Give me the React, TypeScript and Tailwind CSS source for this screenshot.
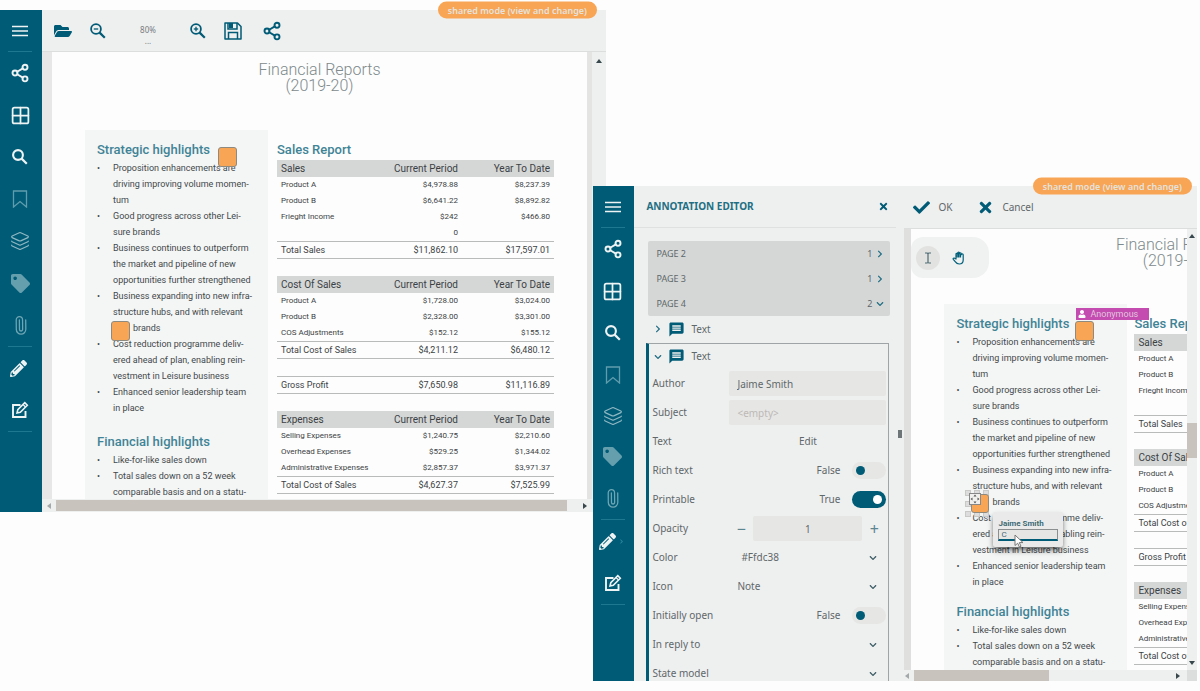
import type { ReactNode } from 'react';
import { Share2, Grid2x2, Layers, Paperclip } from 'lucide-react';
import { FaFolderOpen, FaTag, FaPencilAlt, FaCheck, FaTimes, FaUser, FaChevronRight, FaChevronDown } from 'react-icons/fa';
import { MdMessage } from 'react-icons/md';

function MenuIcon() {
  return (
    <svg viewBox="0 0 16 12" className="h-3 w-4" fill="none" stroke="currentColor" strokeWidth="1.700">
      <path d="M0 1.500h16M0 6h16M0 10.500h16" />
    </svg>
  );
}

function LensIcon({ sign, bold }: { sign?: 'plus' | 'minus'; bold?: boolean }) {
  return (
    <svg viewBox="0 0 16 16" className="h-4 w-4" fill="none" stroke="currentColor" strokeWidth={bold ? 2.1 : 1.8}>
      <circle cx="6" cy="6" r="4.9" />
      <path d="M9.6 9.6l5.2 5.2" strokeWidth="2.2" />
      {sign && <path d="M3.8 6h4.4" strokeWidth="1.3" />}
      {sign === 'plus' && <path d="M6 3.8v4.4" strokeWidth="1.3" />}
    </svg>
  );
}

function SaveIcon() {
  return (
    <svg viewBox="0 0 18 18" className="h-[18px] w-[18px]" fill="none" stroke="currentColor" strokeWidth="1.5">
      <path d="M1 1h12.5L17 4.500V17H1z" strokeLinejoin="round" />
      <path d="M4.500 17v-6.500h9V17" />
      <path d="M4 1v6h9V1" />
      <path d="M5 1h4v5H5z" fill="currentColor" stroke="none" />
    </svg>
  );
}

function BookmarkIcon() {
  return (
    <svg viewBox="0 0 16 18" className="h-[18px] w-4" fill="none" stroke="currentColor" strokeWidth="1.300">
      <path d="M1.500 1h13v16L8 11.500 1.500 17z" />
    </svg>
  );
}

function EditIcon() {
  return (
    <svg viewBox="0 0 18 18" className="h-[18px] w-[18px]" fill="none" stroke="currentColor" strokeWidth="1.900">
      <path d="M9.500 4H2v12h12.500V10" />
      <path d="M6 12l.8-3.300 7-7 2.500 2.500-7 7z" strokeWidth="1.600" />
      <path d="M12 3.500l2.500 2.500" strokeWidth="1.200" />
    </svg>
  );
}

function HandIcon() {
  return (
    <svg viewBox="0 0 14 14" className="h-3.5 w-3.5" fill="none" stroke="#00607a" strokeWidth="1.200" strokeLinejoin="round" strokeLinecap="round">
      <path d="M4 8V3.200c0-1.200 1.700-1.200 1.700 0V2c0-1.200 1.800-1.200 1.800 0v.7c0-1.200 1.800-1.200 1.800 0v1c0-1.200 1.900-1.200 1.900 0V9c0 2.600-1.500 4-4 4-2 0-3-.9-4-2.300L1.300 8.300c-.6-1 .6-1.700 1.400-1z" />
      <path d="M4.200 3.200h1.500V6.500H4.200zM5.900 2h1.500v4.500H5.900zM7.700 2.700h1.400v3.800H7.700z" fill="#00607a" stroke="none" />
    </svg>
  );
}

function TextCursorIcon() {
  return (
    <svg viewBox="0 0 8 12" className="h-3 w-2" fill="none" stroke="#4d6b73" strokeWidth="1.200">
      <path d="M1 1h2l1 .6L5 1h2M4 1.500v9M1 11h2l1-.6 1 .6h2" />
    </svg>
  );
}

function Sidebar({ expanded }: { expanded?: boolean }) {
  const item = 'flex h-[42px] w-full items-center justify-center';
  const mid = 'flex w-full items-center justify-center ' + (expanded ? 'h-[41px]' : 'h-[42px]');
  return (
    <nav
      aria-label="Tools"
      className={(expanded ? 'w-[41px] pr-0.5' : 'w-[42px] pr-0.5') + ' flex shrink-0 flex-col items-center bg-[#005b76] text-[#eef3f4]'}
    >
      <button aria-label="Menu" className="flex h-[41px] w-full items-center justify-center"><MenuIcon /></button>
      <hr className="w-6 border-[#1d7890]" />
      <button aria-label="Share" className={item}><Share2 size={20} strokeWidth={2.3} /></button>
      <button aria-label="Pages" className={item}><Grid2x2 size={21} strokeWidth={2} /></button>
      <button aria-label="Search" className={item}><LensIcon bold /></button>
      <button aria-label="Bookmarks" className={mid + ' text-[#5f9dad]'}><BookmarkIcon /></button>
      <button aria-label="Layers" className={mid + ' text-[#8fb8c3]'}><Layers size={20} strokeWidth={1.4} /></button>
      <button aria-label="Tags" className={mid + ' text-[#659fad]'}><FaTag size={19} /></button>
      <button aria-label="Attachments" className={item + ' text-[#6fa6b4]'}><Paperclip size={19} strokeWidth={1.6} className="-rotate-45" /></button>
      <hr className="w-6 border-[#1d7890]" />
      <button aria-label="Annotate" className={item + ' relative'}>
        <FaPencilAlt size={17} className={expanded ? 'mr-2.5' : 'mr-1'} />
        {expanded && <FaChevronRight size={5} className="absolute right-2 text-[#2f8aa0]" />}
      </button>
      <button aria-label="Edit" className={item}><EditIcon /></button>
      <hr className="w-6 border-[#1d7890]" />
    </nav>
  );
}

type Row = [ReactNode, ReactNode, ReactNode];

function Ledger({ title, rows, total, gap }: { title?: string; rows: Row[]; total: Row; gap: string }) {
  return (
    <table className={'w-[277px] table-fixed border-collapse text-[9px] leading-4 text-[#3c4244] ' + gap}>
      <colgroup>
        <col className="w-[112px]" />
        <col className="w-[73px]" />
        <col />
      </colgroup>
      {title && (
        <thead>
          <tr className="h-[17px] bg-[#d5d7d7] text-[10px]">
            <th className="p-0 pl-1 text-left font-normal leading-4">{title}</th>
            <th className="p-0 pr-1 text-right font-normal leading-4">Current Period</th>
            <th className="p-0 pr-1 text-right font-normal leading-4">Year To Date</th>
          </tr>
        </thead>
      )}
      <tbody>
        {rows.map((row, i) => (
          <tr key={i} className="align-top text-[8px]">
            <td className="p-0 pl-1">{row[0]}</td>
            <td className="p-0 pr-1 text-right">{row[1]}</td>
            <td className="p-0 pr-1 text-right">{row[2]}</td>
          </tr>
        ))}
        <tr className="h-[17px] border-y border-[#b9bbbb]">
          <td className="p-0 pl-1">{total[0]}</td>
          <td className="p-0 pr-1 text-right">{total[1]}</td>
          <td className="p-0 pr-1 text-right">{total[2]}</td>
        </tr>
      </tbody>
    </table>
  );
}

function Bullet({ children }: { children: ReactNode }) {
  return (
    <li className="flex">
      <span className="w-4 shrink-0">•</span>
      <span className="whitespace-nowrap">{children}</span>
    </li>
  );
}

function Report({ compact, children }: { compact?: boolean; children?: ReactNode }) {
  const gap = compact ? 'mb-4' : 'mb-[17px]';
  const heading = 'text-[13px] font-medium leading-5 text-[#3f8496]';
  return (
    <article className="relative min-w-0 flex-1 overflow-hidden bg-[#fdfdfd] font-['Roboto','Liberation_Sans',sans-serif]">
      <div className="flex h-full w-[535px] flex-col">
        <h1 className={(compact ? 'h-[75px] w-[531px] pt-2' : 'h-[78px] pt-2.5') + ' shrink-0 text-center text-[16px] font-light leading-4 text-[#7e8a8c]'}>
          Financial Reports
          <br />
          (2019-20)
        </h1>
        <div className={(compact ? 'gap-[7px]' : 'gap-[9px]') + ' flex min-h-0 flex-1 pl-[33px]'}>
          <section className="w-[183px] shrink-0 bg-[#f4f5f5] pl-3 pt-2.5 text-[9px] leading-4 text-[#43494b]">
            <h2 className={heading}>Strategic highlights</h2>
            <ul>
              <Bullet>Proposition enhancements are<br />driving improving volume momen-<br />tum</Bullet>
              <Bullet>Good progress across other Lei-<br />sure brands</Bullet>
              <Bullet>Business continues to outperform<br />the market and pipeline of new<br />opportunities further strengthened</Bullet>
              <Bullet>Business expanding into new infra-<br />structure hubs, and with relevant<br /><span className="pl-5">brands</span></Bullet>
              <Bullet>Cost reduction programme deliv-<br />ered ahead of plan, enabling rein-<br />vestment in Leisure business</Bullet>
              <Bullet>Enhanced senior leadership team<br />in place</Bullet>
            </ul>
            <h2 className={heading + (compact ? ' mt-3' : ' mt-4')}>Financial highlights</h2>
            <ul>
              <Bullet>Like-for-like sales down</Bullet>
              <Bullet>Total sales down on a 52 week<br />comparable basis and on a statu-</Bullet>
            </ul>
          </section>
          <section className="shrink-0 pt-2.5">
            <h2 className={heading}>Sales Report</h2>
            <Ledger
              title="Sales"
              gap={gap}
              rows={[
                ['Product A', '$4,978.88', '$8,237.39'],
                ['Product B', '$6,641.22', '$8,892.82'],
                ['Frieght Income', <>$242<br />0</>, '$466.80'],
              ]}
              total={['Total Sales', '$11,862.10', '$17,597.01']}
            />
            <Ledger
              title="Cost Of Sales"
              gap={gap}
              rows={[
                ['Product A', '$1,728.00', '$3,024.00'],
                ['Product B', '$2,328.00', '$3,301.00'],
                ['COS Adjustments', '$152.12', '$155.12'],
              ]}
              total={['Total Cost of Sales', '$4,211.12', '$6,480.12']}
            />
            <Ledger gap={gap} rows={[]} total={['Gross Profit', '$7,650.98', '$11,116.89']} />
            <Ledger
              title="Expenses"
              gap={gap}
              rows={[
                ['Selling Expenses', '$1,240.75', '$2,210.60'],
                ['Overhead Expenses', '$529.25', '$1,344.02'],
                ['Administrative Expenses', '$2,857.37', '$3,971.37'],
              ]}
              total={['Total Cost of Sales', '$4,627.37', '$7,525.99']}
            />
          </section>
        </div>
      </div>
      {children}
    </article>
  );
}

const note = 'absolute h-5 w-[19px] rounded-[3px] border border-[#8e8a80] bg-[#f8a555]';

function ModeBadge({ className }: { className: string }) {
  return (
    <span className={'absolute top-0 z-10 -translate-y-1/2 rounded-full bg-[#f8a555] px-2.5 text-[9px] font-semibold leading-[17px] text-[#e4e2de] ' + className}>
      shared mode (view and change)
    </span>
  );
}

function Arrow({ dir, dim }: { dir: 'up' | 'down' | 'left' | 'right'; dim?: boolean }) {
  const d = { up: 'M0 5l3-4 3 4z', down: 'M0 1l3 4 3-4z', left: 'M5 0L1 3l4 3z', right: 'M1 0l4 3-4 3z' }[dir];
  return (
    <svg viewBox="0 0 6 6" className="h-1.5 w-1.5 shrink-0" fill={dim ? '#a3a8a9' : '#37474c'}>
      <path d={d} />
    </svg>
  );
}

function Toggle({ id, checked }: { id: string; checked?: boolean }) {
  return (
    <input
      id={id}
      type="checkbox"
      defaultChecked={checked}
      className="flex h-[17px] w-[34px] appearance-none items-center rounded-full bg-[#e6e6e5] px-0.5 before:ml-0.5 before:block before:h-[9px] before:w-[9px] before:rounded-full before:bg-[#005b76] checked:justify-end checked:bg-[#005b76] checked:before:mr-0.5 checked:before:bg-white"
    />
  );
}

function Field({ id, label, children }: { id: string; label: string; children: ReactNode }) {
  return (
    <div className="flex h-[29px] shrink-0 items-center pl-[3px] pr-0.5">
      <label htmlFor={id} className="w-[77px] shrink-0">{label}</label>
      <div className="flex min-w-0 flex-1 items-center justify-end">{children}</div>
    </div>
  );
}

function Picker({ id, value, indent }: { id: string; value: string; indent?: boolean }) {
  return (
    <div className="flex w-full items-center pr-[9px]">
      <select id={id} className={(indent ? 'pl-3' : 'pl-2') + ' min-w-0 flex-1 appearance-none bg-transparent'} defaultValue={value}>
        <option value={value}>{value}</option>
      </select>
      <FaChevronDown size={8} className="text-[#3d5d66]" />
    </div>
  );
}

function AnnotationEditor() {
  const pages = [['PAGE 2', '1'], ['PAGE 3', '1'], ['PAGE 4', '2']];
  const box = 'h-[25px] w-full min-w-0 rounded-[2px] bg-[#e6e6e5] px-2 placeholder:text-[#bdb9b6]';
  return (
    <aside className="flex w-[270px] shrink-0 bg-[#eeefef] text-[10px] text-[#5f686a]">
      <div className="flex min-w-0 flex-1 flex-col overflow-hidden">
        <header className="flex h-[42px] shrink-0 items-center justify-between border-b border-[#dfe0e0] pl-3 pr-[7px]">
          <h2 className="font-bold text-[#226f84]">ANNOTATION EDITOR</h2>
          <button aria-label="Close" className="text-[#005b76]"><FaTimes size={11} /></button>
        </header>
        <ul className="mx-3.5 mr-1.5 mt-[13px] shrink-0 rounded-[2px] bg-[#d5d7d7] text-[9px]">
          {pages.map(([name, count], i) => (
            <li key={name}>
              <button className="flex h-[25px] w-full items-center gap-1 pl-2 pr-1.5">
                <span className="flex-1 text-left">{name}</span>
                <span>{count}</span>
                {i < 2 ? <FaChevronRight size={8} className="text-[#226f84]" /> : <FaChevronDown size={8} className="text-[#226f84]" />}
              </button>
            </li>
          ))}
        </ul>
        <button className="ml-3 flex h-[26px] shrink-0 items-center gap-1.5 pl-2">
          <FaChevronRight size={8} className="text-[#226f84]" />
          <MdMessage size={17} className="text-[#005b76]" />
          Text
        </button>
        <form className="ml-3 mr-[7px] mt-px flex min-h-0 flex-1 flex-col overflow-hidden border border-b-0 border-l-[3px] border-[#9fa5a6] border-l-[#005b76]">
          <button type="button" className="flex h-[25px] shrink-0 items-center gap-1.5 pl-[5px]">
            <FaChevronDown size={8} className="text-[#226f84]" />
            <MdMessage size={17} className="text-[#005b76]" />
            Text
          </button>
          <Field id="author" label="Author"><input id="author" className={box} defaultValue="Jaime Smith" /></Field>
          <Field id="subject" label="Subject"><input id="subject" className={box} placeholder="<empty>" /></Field>
          <Field id="text" label="Text"><button id="text" type="button" className="w-full">Edit</button></Field>
          <Field id="rich" label="Rich text"><span className="mr-3">False</span><Toggle id="rich" /></Field>
          <Field id="print" label="Printable"><span className="mr-3">True</span><Toggle id="print" checked /></Field>
          <Field id="opacity" label="Opacity">
            <button type="button" aria-label="Decrease opacity" className="w-6 shrink-0 text-[16px] leading-4 text-[#5b858f]">−</button>
            <input id="opacity" className={box + ' text-center'} defaultValue="1" />
            <button type="button" aria-label="Increase opacity" className="w-6 shrink-0 text-[16px] leading-4 text-[#5b858f]">+</button>
          </Field>
          <Field id="color" label="Color"><Picker id="color" value="#Ffdc38" indent /></Field>
          <Field id="icon" label="Icon"><Picker id="icon" value="Note" /></Field>
          <Field id="open" label="Initially open"><span className="mr-3">False</span><Toggle id="open" /></Field>
          <Field id="reply" label="In reply to"><Picker id="reply" value="" /></Field>
          <Field id="state" label="State model"><Picker id="state" value="" /></Field>
        </form>
      </div>
      <div className="flex w-2 flex-col items-center justify-center">
        <span className="h-2 w-1 bg-[#6d7577]" />
      </div>
    </aside>
  );
}

function NotePopup() {
  return (
    <div className="absolute left-[82px] top-[283px] h-[35px] w-[70px] rounded-[2px] bg-[#e9eae9] px-[5px] pt-1.5 text-[8px] text-[#3d6a77] shadow-md shadow-black/50">
      <label htmlFor="reply-text" className="block font-bold leading-[11px]">Jaime Smith</label>
      <input id="reply-text" defaultValue="C" className="block h-3 w-full border border-b-2 border-[#8b8f8f] border-b-[#005b76] bg-[#e6e6e5] px-0.5 leading-[9px]" />
      <svg viewBox="0 0 10 14" className="absolute left-[21px] top-[22px] h-3.5 w-2.5" fill="#fff" stroke="#777" strokeWidth="1">
        <path d="M1 1v10.500l2.700-2.300 1.700 3.800 1.600-.8-1.700-3.600H9z" />
      </svg>
    </div>
  );
}

function SelectedNote() {
  return (
    <div className="absolute left-[54px] top-[261px] grid h-[27px] w-[27px] grid-cols-3 content-between justify-between">
      {Array.from({ length: 9 }, (_, i) => (
        <span key={i} className="h-1.5 w-1.5 border border-[#c9c9c8] bg-[#dcdddc]" />
      ))}
      <span className="absolute left-1.5 top-1 h-[19px] w-[18px] rounded-[3px] border border-[#8e8a80] bg-[#f8a555]" />
      <svg viewBox="0 0 12 12" className="absolute left-1 top-[3px] h-3 w-3">
        <rect x=".5" y=".5" width="11" height="11" fill="#f0f0ef" stroke="#888" />
        <path d="M6 1.500l1.500 2h-3zM6 10.500l1.500-2h-3zM1.500 6l2-1.500v3zM10.500 6l-2-1.500v3z" fill="#555" />
      </svg>
    </div>
  );
}

export default function App() {
  return (
    <main className="relative h-screen overflow-hidden bg-[#fdfdfd] font-['Noto_Sans','Open_Sans',sans-serif]">
      <section className="absolute left-0 top-2.5 flex h-[502px] w-[50.5%]">
        <ModeBadge className="right-[9px]" />
        <Sidebar />
        <div className="flex min-w-0 flex-1 flex-col bg-[#eeefef]">
          <header className="flex h-[42px] shrink-0 items-center border-b border-[#dcdedd] pl-3 text-[#005b76]">
            <button aria-label="Open"><FaFolderOpen size={18} /></button>
            <button aria-label="Zoom out" className="ml-[18px]"><LensIcon sign="minus" /></button>
            <button className="flex w-[84px] flex-col items-center pt-2 text-[8px] leading-[11px] text-[#777d7f]"><span>80%</span><span>...</span></button>
            <button aria-label="Zoom in"><LensIcon sign="plus" /></button>
            <button aria-label="Save" className="ml-[18px]"><SaveIcon /></button>
            <button aria-label="Share" className="ml-5"><Share2 size={20} strokeWidth={2.3} /></button>
          </header>
          <div className="flex min-h-0 flex-1">
            <div className="w-2.5 bg-[#e6e7e6]" />
            <Report>
              <span className={note + ' left-[166px] top-[95px]'} />
              <span className={note + ' left-[59px] top-[269px]'} />
            </Report>
            <div className="w-[5px] bg-[#e4e4e3]" />
            <div className="flex w-3.5 flex-col items-center pt-1.5"><Arrow dir="up" /></div>
          </div>
          <div className="flex h-[13px] shrink-0 items-center pl-1">
            <Arrow dir="left" dim />
            <div className="ml-1 h-[11px] flex-1 bg-[#c9c3be]" />
            <div className="flex w-[39px] justify-end pr-[18px]"><Arrow dir="right" /></div>
          </div>
        </div>
      </section>

      <section className="absolute right-[3px] top-[186px] flex h-[495px] w-[50.3%]">
        <ModeBadge className="right-[5px]" />
        <Sidebar expanded />
        <AnnotationEditor />
        <div className="flex min-w-0 flex-1 flex-col bg-[#eeefef]">
          <header className="flex h-[43px] shrink-0 items-center border-b border-[#dcdedd] pl-[9px] text-[10px] text-[#5f686a]">
            <button className="flex items-center gap-2"><FaCheck size={17} className="text-[#005b76]" />OK</button>
            <button className="ml-[25px] flex items-center gap-2"><FaTimes size={17} className="text-[#005b76]" />Cancel</button>
          </header>
          <div className="flex min-h-0 flex-1">
            <div className="w-[7px] bg-[#dfdfde]" />
            <Report compact>
              <div className="absolute left-0 top-2 flex h-[41px] w-[78px] items-center gap-3 rounded-r-2xl rounded-l-xl bg-[#f0f1f1] pl-[5px]">
                <button aria-label="Select text" className="flex h-6 w-6 items-center justify-center rounded-full bg-[#e2e2e1]"><TextCursorIcon /></button>
                <button aria-label="Pan"><HandIcon /></button>
              </div>
              <span className="absolute left-[165px] top-[79px] flex h-3 w-[73px] items-center gap-1 bg-[#c44bb0] pl-0.5 text-[9px] leading-3 text-[#e3c6df]">
                <FaUser size={8} className="text-white" />
                Anonymous
              </span>
              <span className={note + ' left-[164px] top-[92px]'} />
              <SelectedNote />
              <NotePopup />
            </Report>
            <div className="flex w-2.5 flex-col items-center pb-1 pt-1">
              <Arrow dir="up" />
              <div className="grow-10" />
              <div className="h-[35px] w-full bg-[#c9c3be]" />
              <div className="grow-11" />
              <Arrow dir="down" />
            </div>
          </div>
          <div className="flex h-[11px] shrink-0 items-center">
            <Arrow dir="left" dim />
            <div className="ml-1 h-[11px] w-[46%] bg-[#c9c3be]" />
            <div className="flex flex-1 justify-end pr-1.5"><Arrow dir="right" /></div>
            <div className="h-full w-2.5 bg-[#dcdedd]" />
          </div>
        </div>
      </section>
    </main>
  );
}
